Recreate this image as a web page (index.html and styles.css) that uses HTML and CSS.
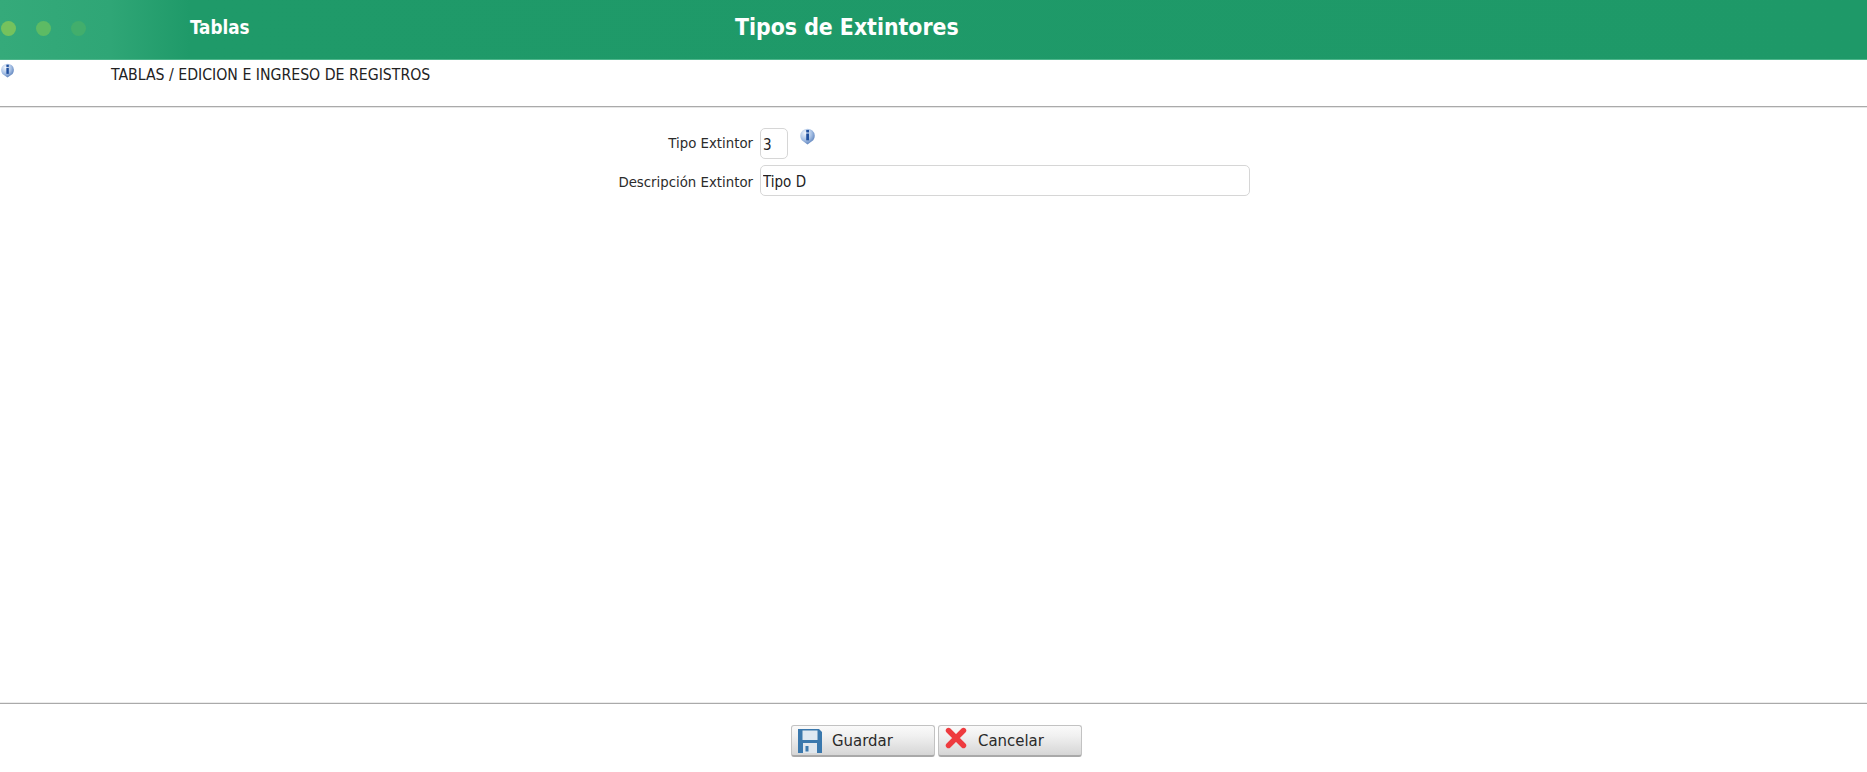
FILE: index.html
```html
<!DOCTYPE html>
<html lang="es">
<head>
<meta charset="utf-8">
<title>Tipos de Extintores</title>
<link rel="stylesheet" href="styles.css">
</head>
<body>
<svg class="defs" width="0" height="0" aria-hidden="true">
  <defs>
    <radialGradient id="infoGrad" cx="35%" cy="28%" r="80%">
      <stop offset="0" stop-color="#f2f6fc"/>
      <stop offset="0.55" stop-color="#a5bfe4"/>
      <stop offset="1" stop-color="#4f76b4"/>
    </radialGradient>
    <symbol id="info" viewBox="0 0 16 16">
      <path d="M8 15.5 L2.6 11.6 A6.8 6.8 0 1 1 13.4 11.6 Z" fill="url(#infoGrad)"/>
      <rect x="6.8" y="1.8" width="2.6" height="2.4" fill="#1f4f9e"/>
      <rect x="6.8" y="5.2" width="2.6" height="6.4" fill="#1f4f9e"/>
    </symbol>
  </defs>
</svg>
<header class="topbar">
  <div class="lights">
    <span class="light light-a"></span>
    <span class="light light-b"></span>
    <span class="light light-c"></span>
  </div>
  <div class="module">Tablas</div>
  <h1 class="title">Tipos de Extintores</h1>
</header>
<div class="crumbs">
  <svg class="info info-crumb"><use href="#info"/></svg>
  <span class="crumb-text">TABLAS / EDICION E INGRESO DE REGISTROS</span>
</div>
<main class="content">
  <form class="form">
    <label class="label label-first" for="tipo">Tipo Extintor</label>
    <div class="field">
      <input class="input input-short" id="tipo" type="text" value="3">
      <svg class="info info-field"><use href="#info"/></svg>
    </div>
    <label class="label label-second" for="desc">Descripción Extintor</label>
    <div class="field">
      <input class="input input-long" id="desc" type="text" value="Tipo D">
    </div>
  </form>
</main>
<footer class="actions">
  <button class="btn btn-save" type="button">
    <svg class="btn-icon" viewBox="0 0 24 24">
      <path d="M0 0H21L24 3V24H0Z" fill="#3a78ad"/>
      <rect x="4.5" y="1.5" width="15" height="9.5" fill="#dfe9f2"/>
      <rect x="5" y="14" width="14" height="10" fill="#dfe7ee"/>
      <rect x="7.5" y="17" width="3" height="5.5" fill="#3a78ad"/>
    </svg>
    <span class="btn-text">Guardar</span>
  </button>
  <button class="btn btn-cancel" type="button">
    <svg class="btn-icon btn-icon-x" viewBox="0 0 22 22">
      <path d="M3.5 3.5 L18.5 18.5 M18.5 3.5 L3.5 18.5" stroke="#ee3b3f" stroke-width="5.4" stroke-linecap="round" fill="none"/>
    </svg>
    <span class="btn-text">Cancelar</span>
  </button>
</footer>
</body>
</html>
```

FILE: styles.css
```css
* { box-sizing: border-box; }
html, body { height: 100%; }
body {
  margin: 0;
  display: flex;
  flex-direction: column;
  height: 100vh;
  overflow: hidden;
  background: #fff;
  color: #222;
  font-family: "DejaVu Sans Condensed", "DejaVu Sans", sans-serif;
  font-stretch: condensed;
  font-size: 15px;
}
.defs { position: absolute; }

.topbar {
  flex: none;
  height: 60px;
  display: flex;
  align-items: center;
  padding-bottom: 3px;
  background: linear-gradient(90deg, #35aa7a 0, #2fa676 110px, #1f9a69 190px, #1e9968 100%);
  border-bottom: 1px solid #4fb68c;
  color: #fff;
}
.lights {
  width: 190px;
  flex: none;
  display: flex;
  gap: 20px;
  padding-left: 1px;
}
.light { width: 15px; height: 15px; border-radius: 50%; }
.light-a { background: #75c25d; }
.light-b { background: #5dbb64; }
.light-c { background: #42ae6c; }
.module {
  width: 545px;
  flex: none;
  padding-bottom: 2px;
  font-weight: 700;
  font-size: 18.7px;
}
.title {
  margin: 0;
  font-weight: 700;
  font-size: 22.8px;
  line-height: 1.2;
}

.crumbs {
  flex: none;
  height: 47px;
  display: flex;
  align-items: flex-start;
  border-bottom: 1px solid #aaa;
  box-shadow: 0 1px 0 #e6e6e6;
}
.info { display: block; width: 15px; height: 15px; }
.info-crumb { margin-top: 3px; width: 15px; flex: none; }
.crumb-text {
  margin-left: 96px;
  margin-top: 7px;
  font-size: 15.7px;
  line-height: 16px;
  color: #222;
}

.content { flex: 1; min-height: 0; padding-top: 21px; }
.form {
  display: grid;
  grid-template-columns: 760px 1fr;
  row-gap: 6px;
}
.label {
  padding-right: 7px;
  text-align: right;
  font-size: 14.8px;
  line-height: 30px;
  color: #2b2b2b;
}
.label-second { padding-top: 2px; }
.field { display: flex; align-items: flex-start; }
.input {
  height: 31px;
  padding: 3px 2px 0;
  border: 1px solid #d6d6d6;
  border-radius: 5px;
  background: #fff;
  color: #222;
  font-family: inherit;
  font-stretch: condensed;
  font-size: 15px;
  outline: 0;
}
.input-short { width: 28px; }
.input-long { width: 490px; }
.info-field { margin: 0 0 0 11px; width: 17px; height: 17px; flex: none; }

.actions {
  flex: none;
  height: 69px;
  display: flex;
  justify-content: center;
  align-items: flex-start;
  gap: 3px;
  padding: 21px 0 0 6px;
  border-top: 1px solid #aaa;
  box-shadow: 0 -1px 0 #ececec;
}
.btn {
  width: 144px;
  height: 32px;
  display: flex;
  align-items: center;
  padding: 0 0 0 6px;
  border: 1px solid #c2c2c2;
  border-bottom: 2px solid #a9a9a9;
  border-radius: 3px;
  background: linear-gradient(180deg, #fafafa 0, #f0f0f0 35%, #d6d6d6 100%);
  color: #2a2a2a;
  font-family: inherit;
  font-stretch: condensed;
  font-size: 16.6px;
  line-height: 1;
}
.btn-text { padding-top: 2px; }
.btn-icon { width: 24px; height: 24px; flex: none; }
.btn-save .btn-text { margin-left: 10px; }
.btn-icon-x { margin-top: -5px; width: 22px; height: 22px; }
.btn-cancel .btn-text { margin-left: 11px; }
```
